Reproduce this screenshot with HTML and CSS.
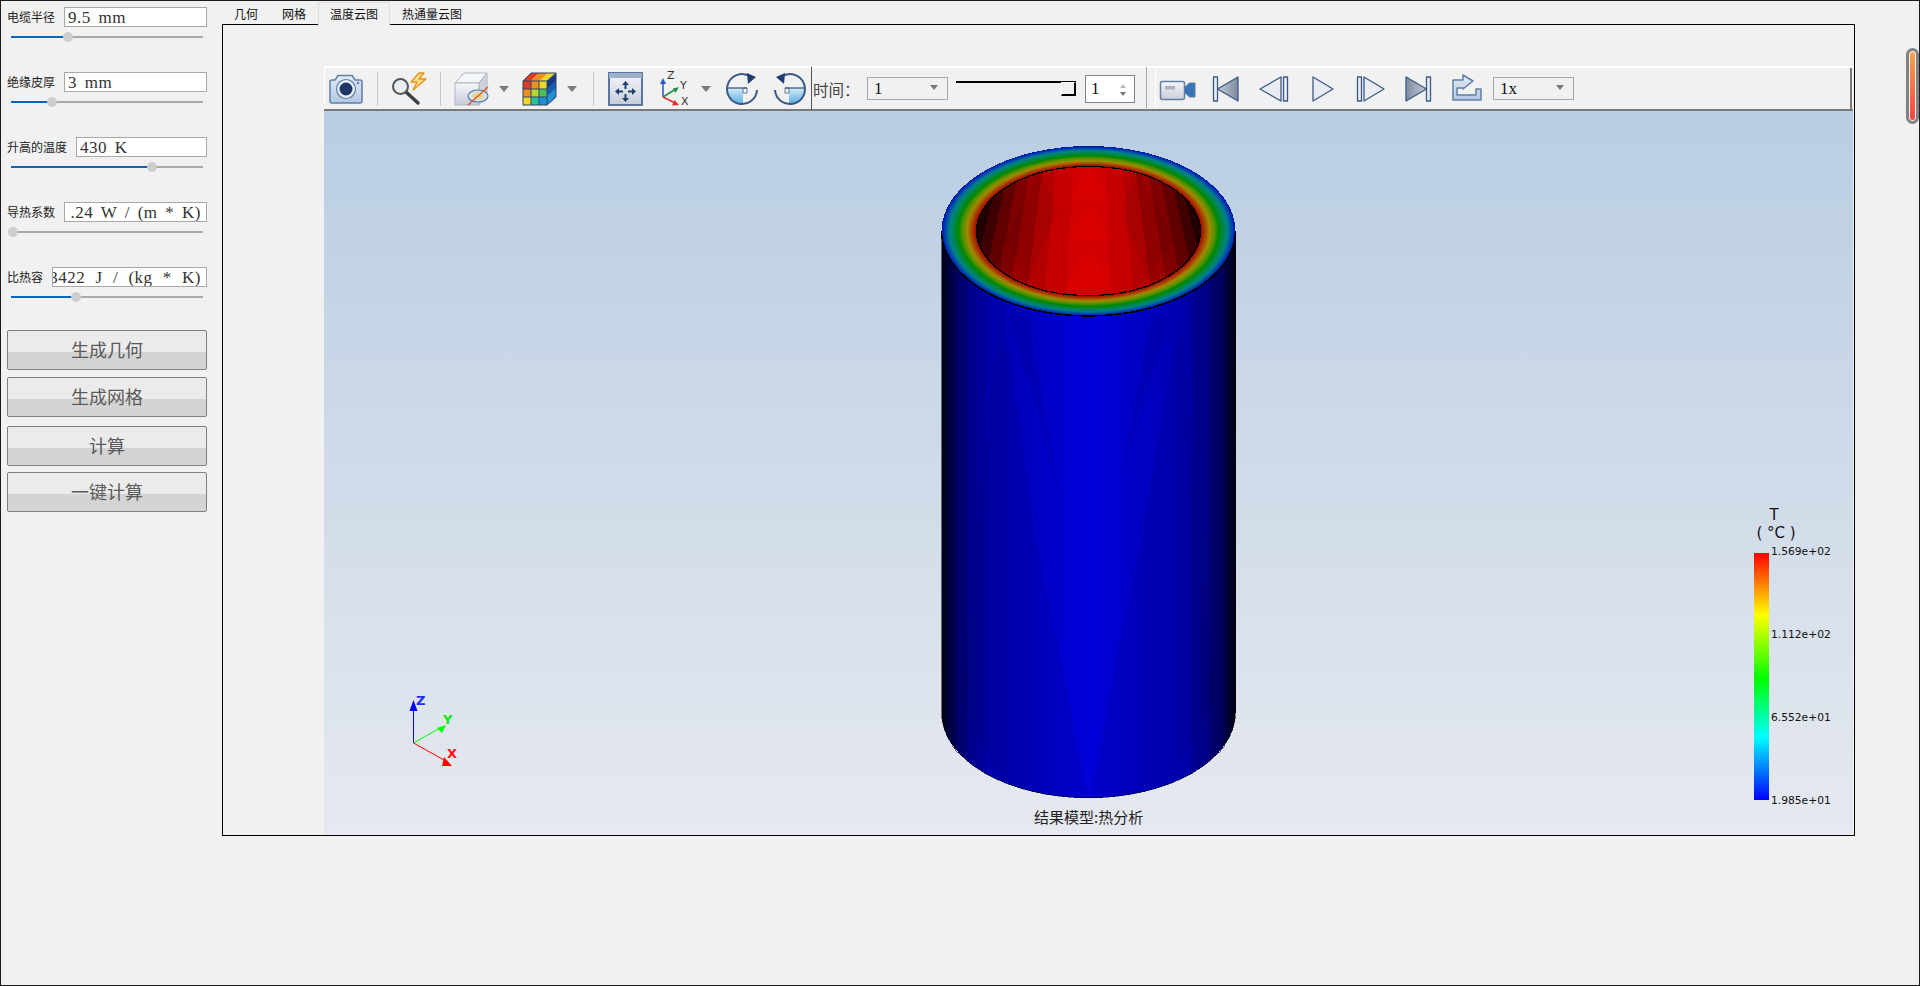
FILE: index.html
```html
<!DOCTYPE html>
<html lang="zh">
<head>
<meta charset="utf-8">
<title>电缆热分析</title>
<link rel="stylesheet" href="styles.css">
</head>
<body>
<svg class="defs" aria-hidden="true">
  <defs>
    <linearGradient id="gBody" x1="0" y1="0" x2="0" y2="1"><stop offset="0" stop-color="#e3ebf6"/><stop offset="1" stop-color="#b4c8e2"/></linearGradient>
    <linearGradient id="gGrey" x1="0" y1="0" x2="0" y2="1"><stop offset="0" stop-color="#f6f7f9"/><stop offset="1" stop-color="#c6cdda"/></linearGradient>
    <linearGradient id="gSolid" x1="0" y1="0" x2="1" y2="0"><stop offset="0" stop-color="#7f8ba0"/><stop offset="1" stop-color="#c4cad6"/></linearGradient>
    <linearGradient id="gSolidR" x1="0" y1="0" x2="1" y2="0"><stop offset="0" stop-color="#c4cad6"/><stop offset="1" stop-color="#7f8ba0"/></linearGradient>
    <linearGradient id="gPie" x1="0" y1="0" x2="0" y2="1"><stop offset="0" stop-color="#d5ebf9"/><stop offset="1" stop-color="#57ade3"/></linearGradient>
  </defs>
</svg>
<div class="window">
  <aside class="side">
    <div class="param">
      <div class="field"><span class="field-label">电缆半径</span><div class="value">9.5 mm</div></div>
      <div class="slider"><div class="slider-fill" style="width:57px"><i class="slider-thumb"></i></div></div>
    </div>
    <div class="param">
      <div class="field"><span class="field-label">绝缘皮厚</span><div class="value">3 mm</div></div>
      <div class="slider"><div class="slider-fill" style="width:41px"><i class="slider-thumb"></i></div></div>
    </div>
    <div class="param">
      <div class="field"><span class="field-label">升高的温度</span><div class="value">430 K</div></div>
      <div class="slider"><div class="slider-fill" style="width:141px"><i class="slider-thumb"></i></div></div>
    </div>
    <div class="param">
      <div class="field"><span class="field-label">导热系数</span><div class="value value-clip"><span>.24 W / (m * K)</span></div></div>
      <div class="slider"><div class="slider-fill" style="width:2px"><i class="slider-thumb"></i></div></div>
    </div>
    <div class="param">
      <div class="field"><span class="field-label">比热容</span><div class="value value-clip value-long"><span>3422 J / (kg * K)</span></div></div>
      <div class="slider"><div class="slider-fill" style="width:65px"><i class="slider-thumb"></i></div></div>
    </div>
    <div class="actions">
      <button class="action">生成几何</button>
      <button class="action">生成网格</button>
      <button class="action action-far">计算</button>
      <button class="action action-near">一键计算</button>
    </div>
  </aside>

  <main class="main">
    <nav class="tabs">
      <span class="tab">几何</span>
      <span class="tab">网格</span>
      <span class="tab tab-on">温度云图</span>
      <span class="tab">热通量云图</span>
    </nav>
    <section class="pane">
      <div class="toolbar">
        <span class="tool"><svg viewBox="0 0 44 40"><path class="ic" d="M8 11h3l3-4.500h14l3 4.500h5q2 0 2 2v19q0 2-2 2H8q-2 0-2-2V13q0-2 2-2z"/><circle cx="22" cy="20" r="9.500" class="lens"/><circle cx="22" cy="20" r="6.500" class="pupil"/><circle cx="34" cy="14" r="1.200" class="dot"/></svg></span>
        <span class="sep"></span>
        <span class="tool"><svg viewBox="0 0 44 40"><line x1="19" y1="23" x2="31" y2="34" class="handle"/><circle cx="13.500" cy="17.500" r="7.500" class="glass"/><path class="bolt" d="M32 4l-8 9h6l-4 8 13-11h-7l5-6z"/></svg></span>
        <span class="sep"></span>
        <span class="tool"><svg viewBox="0 0 44 40"><path class="boxt" d="M5 14l9-10h23l-8 10z"/><path class="boxs" d="M29 14l8-10v22l-8 10z"/><rect x="5" y="14" width="24" height="22" class="boxf"/><ellipse cx="28" cy="27" rx="10" ry="6" class="disc"/><ellipse cx="28" cy="27" rx="6" ry="3.500" class="disc2"/><line x1="18" y1="36" x2="38" y2="18" class="slash"/></svg></span>
        <span class="drop"></span>
        <span class="tool g4"><svg viewBox="0 0 44 40"><path class="c-d" d="M29 12l9-8v24l-9 8z"/><path class="c-b" d="M29 19.300l9-8v8.500l-9 8z"/><path class="c-c" d="M29 27l9-8v9l-9 8z"/><path class="c-r" d="M5 12l8-8h8l-8 8z"/><path class="c-o" d="M13 12l8-8h9l-8 8z"/><path class="c-y" d="M21 12l9-8h8l-9 8z"/><rect x="5" y="12" width="8" height="8" class="c-r"/><rect x="13" y="12" width="8" height="8" class="c-o"/><rect x="21" y="12" width="8" height="8" class="c-y"/><rect x="5" y="20" width="8" height="8" class="c-o"/><rect x="13" y="20" width="8" height="8" class="c-l"/><rect x="21" y="20" width="8" height="8" class="c-g"/><rect x="5" y="28" width="8" height="8" class="c-y"/><rect x="13" y="28" width="8" height="8" class="c-t"/><rect x="21" y="28" width="8" height="8" class="c-c"/><path class="c-grid" d="M5 12h24v24H5zM13 12v24M21 12v24M5 20h24M5 28h24M5 12l8-8h25l-9 8M38 4v24l-9 8M13 4l-8 8"/></svg></span>
        <span class="drop"></span>
        <span class="sep sep-wide"></span>
        <span class="tool"><svg viewBox="0 0 44 40"><rect x="6" y="4" width="33" height="32" class="fit"/><rect x="6" y="4" width="33" height="5" class="fitbar"/><path class="mv" d="M22.500 12l3.500 4h-2.500v4h-2v-4H19zM22.500 33l-3.500-4h2.500v-4h2v4H26zM12 22.500l4-3.500v2.500h4v2h-4V26zM33 22.500L29 26v-2.500h-4v-2h4V19z"/></svg></span>
        <span class="tool g5"><svg viewBox="0 0 44 40"><line x1="11" y1="28" x2="11" y2="13" class="ax-z"/><path class="ax-zh" d="M11 9l3 6H8z"/><line x1="11" y1="28" x2="23" y2="20.500" class="ax-y"/><path class="ax-yh" d="M27 18l-3.500 6-2.500-4.500z"/><line x1="11" y1="28" x2="22" y2="33.500" class="ax-x"/><path class="ax-xh" d="M27 36l-7 .5 2.500-5.500z"/><text x="15" y="10" class="ax-t">Z</text><text x="28" y="20" class="ax-t">Y</text><text x="29" y="36" class="ax-t">X</text></svg></span>
        <span class="drop"></span>
        <span class="tool tool-sm g6"><svg viewBox="0 0 40 40"><path class="pie" d="M5 19h16v16A15 15 0 0 1 5 19z"/><path class="pie-sq" d="M21 19h4v5h-4z"/><line x1="5" y1="19" x2="25" y2="19" class="pie-l"/><path class="arc" d="M35 21A15 15 0 1 1 27 6.800"/><path class="head" d="M25 4l9 4-8 7z"/></svg></span>
        <span class="tool tool-sm g8"><svg viewBox="0 0 40 40"><g class="flip"><path class="pie" d="M5 19h16v16A15 15 0 0 1 5 19z"/><path class="pie-sq" d="M21 19h4v5h-4z"/><line x1="5" y1="19" x2="25" y2="19" class="pie-l"/><path class="arc" d="M35 21A15 15 0 1 1 27 6.800"/><path class="head" d="M25 4l9 4-8 7z"/></g></svg></span>
        <span class="divider"></span>
        <span class="time-label">时间：</span>
        <span class="combo combo-time"><span>1</span><i class="combo-arrow"></i></span>
        <span class="timeline"><i class="timeline-handle"></i></span>
        <span class="spin"><span>1</span><i class="spin-arrows"></i></span>
        <span class="sep-soft"></span>
        <div class="toolbar2">
          <span class="tool"><svg viewBox="0 0 44 40"><rect x="4.500" y="12.500" width="24" height="18" rx="2" class="ic-grey"/><rect x="9" y="17" width="10" height="3.500" class="vbar"/><path class="vlens" d="M28.500 18.500l5-4.500h5.500v14h-5.500l-5-4.500z"/></svg></span>
          <span class="tool g4"><svg viewBox="0 0 44 40"><rect x="9.500" y="8" width="4" height="24" class="pb"/><path class="pb-solid-l" d="M13.500 20L34 8v24z"/></svg></span>
          <span class="tool g4"><svg viewBox="0 0 44 40"><path class="pb" d="M8 20L29 8v24z"/><rect x="31.500" y="8" width="4" height="24" class="pb"/></svg></span>
          <span class="tool g5"><svg viewBox="0 0 44 40"><path class="pb" d="M12 8l20 12-20 12z"/></svg></span>
          <span class="tool g3"><svg viewBox="0 0 44 40"><rect x="9.500" y="8" width="4" height="24" class="pb"/><path class="pb" d="M16 8l20 12-20 12z"/></svg></span>
          <span class="tool g4"><svg viewBox="0 0 44 40"><path class="pb-solid-r" d="M10 8l20.500 12L10 32z"/><rect x="30.500" y="8" width="4" height="24" class="pb"/></svg></span>
          <span class="tool g5"><svg viewBox="0 0 44 40"><path class="ic" d="M8 11h10V6l10 6-10 8v-1h-6v7h19v-6h5v11H8z"/></svg></span>
          <span class="combo combo-speed g4"><span>1x</span><i class="combo-arrow"></i></span>
        </div>
      </div>
      <div class="view">
        <svg class="scene" viewBox="324 111 1529 724">
          <defs>
            <linearGradient id="side" x1="0" y1="0" x2="1" y2="0">
              <stop offset="0" stop-color="#000018"/><stop offset=".02" stop-color="#00002c"/><stop offset=".02" stop-color="#00003a"/><stop offset=".05" stop-color="#000052"/><stop offset=".05" stop-color="#000064"/><stop offset=".09" stop-color="#00007c"/><stop offset=".09" stop-color="#00008c"/><stop offset=".15" stop-color="#00009e"/><stop offset=".15" stop-color="#0000a8"/><stop offset=".24" stop-color="#0000b8"/><stop offset=".35" stop-color="#0000c8"/><stop offset=".5" stop-color="#0000da"/><stop offset=".65" stop-color="#0000c8"/><stop offset=".77" stop-color="#0000b8"/><stop offset=".85" stop-color="#0000a4"/><stop offset=".85" stop-color="#000096"/><stop offset=".91" stop-color="#000082"/><stop offset=".91" stop-color="#000072"/><stop offset=".96" stop-color="#00005a"/><stop offset=".96" stop-color="#000042"/><stop offset=".985" stop-color="#000032"/><stop offset=".985" stop-color="#000022"/><stop offset="1" stop-color="#000014"/>
            </linearGradient>
            <radialGradient id="ring" cx=".5" cy=".5" r=".5">
              <stop offset=".76" stop-color="#a00000"/><stop offset=".79" stop-color="#a83a00"/><stop offset=".825" stop-color="#a08a00"/><stop offset=".86" stop-color="#4e9000"/><stop offset=".885" stop-color="#008800"/><stop offset=".92" stop-color="#008650"/><stop offset=".945" stop-color="#008288"/><stop offset=".97" stop-color="#0050a8"/><stop offset="1" stop-color="#0010b4"/>
            </radialGradient>
            <linearGradient id="bar" x1="0" y1="0" x2="0" y2="1">
              <stop offset="0" stop-color="#ff0000"/><stop offset=".25" stop-color="#ffff00"/><stop offset=".51" stop-color="#00ff00"/><stop offset=".745" stop-color="#00ffff"/><stop offset="1" stop-color="#0000ff"/>
            </linearGradient>
            <clipPath id="innerClip"><ellipse cx="1088.500" cy="231" rx="112" ry="64.500"/></clipPath>
            <clipPath id="sideClip"><path d="M941.500 231V713A147 85 0 0 0 1235.500 713V231z"/></clipPath>
          </defs>
          <g class="crisp">
            <path d="M941.500 231V713A147 85 0 0 0 1235.500 713V231z" fill="url(#side)" class="outline"/>
            <g clip-path="url(#sideClip)" class="facets">
              <path d="M1000 300L1040 560L1010 800L960 700z"/>
              <path d="M1180 320L1140 540L1165 790L1215 700z"/>
              <path d="M1040 560L1089 800L1010 800z"/>
              <path d="M1140 540L1089 800L1165 790z"/>
              <path d="M1010 316L1060 500L1030 316z"/>
              <path d="M1150 316L1120 480L1170 316z"/>
            </g>
            <ellipse cx="1088.500" cy="231" rx="147" ry="85" fill="url(#ring)"/>
            <path d="M941.500 231A147 85 0 0 0 1235.500 231" class="rim"/>
            <g clip-path="url(#innerClip)">
              <path fill="#200000" d="M1089 -200L950 300H968z"/><path fill="#3e0000" d="M1089 -200L968 300H980z"/><path fill="#600000" d="M1089 -200L980 300H994z"/><path fill="#7e0000" d="M1089 -200L994 300H1009z"/><path fill="#9a0000" d="M1089 -200L1009 300H1026z"/><path fill="#b40000" d="M1089 -200L1026 300H1044z"/><path fill="#c60000" d="M1089 -200L1044 300H1067z"/><path fill="#d20000" d="M1089 -200L1067 300H1111z"/><path fill="#c60000" d="M1089 -200L1111 300H1134z"/><path fill="#b40000" d="M1089 -200L1134 300H1152z"/><path fill="#9a0000" d="M1089 -200L1152 300H1169z"/><path fill="#7e0000" d="M1089 -200L1169 300H1184z"/><path fill="#600000" d="M1089 -200L1184 300H1198z"/><path fill="#3e0000" d="M1089 -200L1198 300H1210z"/><path fill="#200000" d="M1089 -200L1210 300H1226z"/>
              <path class="glint" d="M1089 167L1108 198H1070zM1089 205L1112 240H1066zM1089 250L1114 290H1064z"/>
              <path class="shade" d="M1040 170L1005 240L1030 280L1058 210zM1138 170L1173 240L1148 280L1120 210z"/>
            </g>
            <ellipse cx="1088.500" cy="231" rx="112" ry="64.500" class="inner"/>
          </g>
          <line x1="413.500" y1="743" x2="413.500" y2="708" class="tri-z"/>
          <path class="tri-zf" d="M413.500 700l4 11h-8z"/>
          <text x="416" y="705" class="tri-tz">Z</text>
          <line x1="413.500" y1="743" x2="440" y2="728" class="tri-y"/>
          <path class="tri-yf" d="M446 725l-4 8-5-5z"/>
          <text x="443" y="724" class="tri-ty">Y</text>
          <line x1="413.500" y1="743" x2="444" y2="760" class="tri-x"/>
          <path class="tri-xf" d="M452 766h-10l2-9z"/>
          <text x="447" y="758" class="tri-tx">X</text>
          <text x="1034" y="823" class="caption">结果模型:热分析</text>
          <text x="1774" y="520" class="bar-title" text-anchor="middle">T</text>
          <text x="1776" y="538" class="bar-title" text-anchor="middle">( °C )</text>
          <rect x="1754" y="553" width="15" height="247" fill="url(#bar)"/>
          <text x="1771" y="555" class="bar-label">1.569e+02</text>
          <text x="1771" y="638" class="bar-label">1.112e+02</text>
          <text x="1771" y="721" class="bar-label">6.552e+01</text>
          <text x="1771" y="804" class="bar-label">1.985e+01</text>
        </svg>
      </div>
    </section>
  </main>

  <div class="rail"><div class="thumb"></div></div>
</div>
</body>
</html>
```

FILE: styles.css
```css
* { box-sizing: border-box; }
html, body { margin: 0; padding: 0; height: 100%; }
body { background: #f1f1f1; font-family: "Noto Sans CJK SC", "Liberation Sans", sans-serif; overflow: hidden; }
.defs { position: absolute; width: 0; height: 0; }
.window { display: flex; height: 986px; border: 1px solid #1c1c1c; background: #f1f1f1; }

/* left parameter column */
.side { width: 221px; flex: none; padding-top: 6px; }
.param { height: 65px; }
.field { display: flex; align-items: center; gap: 9px; padding: 0 15px 0 6px; height: 20px; }
.field-label { font-size: 12px; line-height: 20px; color: #222; white-space: nowrap; }
.value { flex: 1; min-width: 0; height: 20px; display: flex; align-items: center; padding: 2px 3px 0; overflow: hidden; background: #fff; border: 1px solid #a8a8a8; font: 17px/16px "Liberation Serif", "Noto Sans CJK SC", serif; letter-spacing: .5px; word-spacing: 3px; color: #333; white-space: pre; }
.value-clip { justify-content: flex-end; padding: 2px 5px 0 0; }
.value-long { word-spacing: 5.500px; }
.value-clip span { flex: none; }
.slider { position: relative; height: 2px; margin: 9px 19px 0 10px; background: #aaa; }
.slider-fill { position: relative; height: 2px; background: #0a64ba; }
.slider-thumb { position: absolute; right: -5px; top: -4px; width: 10px; height: 10px; border-radius: 50%; background: #cdcdcd; }

.actions { padding: 0 15px 0 6px; margin-top: -2px; display: flex; flex-direction: column; gap: 7px; }
.action { height: 40px; padding: 0 0 2px; border: 1px solid #808080; border-radius: 2px; background: linear-gradient(#ebebeb 0, #ebebeb 21px, #d4d4d4 21px, #d4d4d4 100%); font: 18px/20px "Noto Sans CJK SC", sans-serif; color: #5a5a5a; }
.action-far { margin-top: 2px; }
.action-near { margin-top: -1px; }

/* main tabbed area */
.main { width: 1633px; flex: none; display: flex; flex-direction: column; height: 835px; }
.tabs { display: flex; height: 23px; padding-top: 1px; flex: none; }
.tab { padding: 0 12px; font-size: 12px; line-height: 24px; color: #111; white-space: nowrap; }
.tab-on { position: relative; z-index: 1; height: 24px; line-height: 22px; padding: 0 11px; background: #f1f1f1; border: 1px solid #dcdcdc; border-bottom-color: #f1f1f1; }
.pane { flex: 1; min-height: 0; border: 1px solid #000; padding: 41px 1px 0 101px; display: flex; flex-direction: column; }

/* toolbar */
.toolbar { flex: none; height: 45px; display: flex; align-items: center; border-top: 2px solid #fff; border-bottom: 2px solid #7a7a7a; box-shadow: inset 1px 0 0 #fff; background: #f1f1f1; }
.tool { flex: none; width: 44px; height: 40px; display: block; }
.tool svg { display: block; width: 100%; height: 100%; overflow: visible; }
.tool-sm { width: 40px; }
.g3 { margin-left: 3px; } .g4 { margin-left: 4px; } .g5 { margin-left: 5px; } .g6 { margin-left: 6px; } .g8 { margin-left: 8px; }
.sep { flex: none; width: 1px; height: 34px; margin: 0 9px; background: #c8c8c8; }
.sep-wide { margin-left: 11px; }
.drop { flex: none; width: 20px; height: 6px; position: relative; }
.drop::after { content: ""; position: absolute; left: 5px; top: 0; border: 5px solid transparent; border-top: 6px solid #7b7b7b; border-bottom: 0; }
.divider { flex: none; width: 1px; height: 43px; margin-left: 1px; background: #555; }
.time-label { flex: none; width: 54px; margin-left: 1px; font-size: 15.500px; line-height: 20px; color: #444; }
.combo { flex: none; position: relative; height: 23px; background: #f1f1f1; border: 1px solid #a8a8a8; font: 17px/21px "Liberation Serif", serif; color: #111; padding-left: 6px; }
.combo-time { width: 81px; }
.combo-speed { width: 81px; }
.combo-arrow { position: absolute; right: 9px; top: 7px; border: 4px solid transparent; border-top: 5px solid #777; border-bottom: 0; }
.timeline { flex: none; position: relative; width: 120px; height: 14px; margin-left: 8px; border-top: 2px solid #000; align-self: flex-start; margin-top: 13px; }
.timeline-handle { position: absolute; right: 0; top: -1px; width: 15px; height: 14px; background: #f1f1f1; border-right: 2px solid #000; border-bottom: 2px solid #000; border-top: 1px solid #fff; border-left: 1px solid #fff; }
.spin { flex: none; position: relative; width: 50px; height: 28px; margin-left: 9px; background: #fff; border: 1px solid #858585; font: 17px/26px "Liberation Serif", serif; color: #111; padding-left: 5px; }
.spin-arrows { position: absolute; right: 8px; top: 8px; width: 0; height: 0; border: 3px solid transparent; border-top: 0; border-bottom: 4px solid #bbb; }
.spin-arrows::after { content: ""; position: absolute; left: -3px; top: 8px; border: 3px solid transparent; border-bottom: 0; border-top: 4px solid #777; }
.sep-soft { flex: none; width: 1px; height: 43px; margin-left: 11px; background: #aaa; }
.toolbar2 { flex: 1; height: 100%; display: flex; align-items: center; margin-left: 8px; border-left: 1px solid #fff; border-right: 2px solid #7a7a7a; margin-right: 1px; }

/* toolbar icons */
.ic { fill: url(#gBody); stroke: #5f7fa6; stroke-width: 1.500; stroke-linejoin: round; }
.ic-grey { fill: url(#gGrey); stroke: #5f7fa6; stroke-width: 1.500; }
.lens { fill: #e8eff8; stroke: #5f7fa6; stroke-width: 1.200; }
.pupil { fill: #1d3768; }
.dot { fill: #5f7fa6; }
.glass { fill: #e9eef3; stroke: #555; stroke-width: 2; }
.handle { stroke: #3f3f3f; stroke-width: 3.500; stroke-linecap: round; }
.bolt { fill: #fde28e; stroke: #ee8f12; stroke-width: 1.300; stroke-linejoin: round; }
.boxt { fill: #f5f6f8; stroke: #aeb7c4; }
.boxs { fill: #cdd3dc; stroke: #aeb7c4; }
.boxf { fill: url(#gGrey); stroke: #aeb7c4; }
.disc { fill: #d8e2ee; stroke: #56779f; stroke-width: 1.200; }
.disc2 { fill: #e8d894; }
.slash { stroke: #e0582a; stroke-width: 1.500; }
.c-r { fill: #df3d20; } .c-o { fill: #f0901a; } .c-y { fill: #eed726; } .c-l { fill: #b6d433; } .c-g { fill: #4cc35a; } .c-t { fill: #2dc398; } .c-c { fill: #2092d4; } .c-d { fill: #143a82; } .c-b { fill: #1c5cb0; }
.c-grid { fill: none; stroke: #2d4468; stroke-width: 1; }
.fit { fill: url(#gGrey); stroke: #5a76a0; stroke-width: 2; }
.fitbar { fill: #9fb1ca; }
.mv { fill: #1f3f70; }
.ax-z { stroke: #2a56c4; stroke-width: 1.500; } .ax-zh { fill: #2a56c4; }
.ax-y { stroke: #1f8f4a; stroke-width: 1.500; } .ax-yh { fill: #1f8f4a; }
.ax-x { stroke: #e62b2b; stroke-width: 1.500; } .ax-xh { fill: #e62b2b; }
.ax-t { font: 11px "DejaVu Sans", sans-serif; fill: #333; }
.arc { fill: none; stroke: #3a5a85; stroke-width: 2; }
.head { fill: #1f3f70; }
.pie { fill: url(#gPie); }
.pie-sq { fill: #f4f8fc; stroke: #3a5a85; stroke-width: .800; }
.pie-l { stroke: #3a5a85; stroke-width: 1.300; }
.flip { transform: translateX(40px) scaleX(-1); }
.vbar { fill: #aab3c2; }
.vlens { fill: #3a74b6; stroke: #5f7fa6; }
.pb { fill: #e9edf3; stroke: #3a5a85; stroke-width: 1.300; stroke-linejoin: round; }
.pb-solid-l { fill: url(#gSolidR); stroke: #3a5a85; stroke-width: 1.300; stroke-linejoin: round; }
.pb-solid-r { fill: url(#gSolid); stroke: #3a5a85; stroke-width: 1.300; stroke-linejoin: round; }

/* 3D view */
.view { flex: 1; min-height: 0; background: linear-gradient(#b9cde3, #e6e9ef); }
.scene { display: block; width: 100%; height: 100%; }
.crisp { shape-rendering: crispEdges; }
.outline { stroke: #000; stroke-width: .500; }
.facets path { fill: #000; opacity: .06; }
.glint { fill: #e00000; opacity: .5; }
.shade { fill: #000; opacity: .06; }
.rim { fill: none; stroke: #000; stroke-width: 1.500; }
.inner { fill: none; stroke: #000; stroke-width: 1.200; }
.tri-z { stroke: #0000ff; stroke-width: 1; } .tri-zf { fill: #0000ff; }
.tri-y { stroke: #00ff00; stroke-width: 1; } .tri-yf { fill: #00ff00; }
.tri-x { stroke: #ff0000; stroke-width: 1; } .tri-xf { fill: #ff0000; }
.tri-tz, .tri-ty, .tri-tx { font: bold 13px "DejaVu Sans", sans-serif; }
.tri-tz { fill: #2030e8; } .tri-ty { fill: #00ee00; } .tri-tx { fill: #ff1010; }
.caption { font: 15px "Noto Sans CJK SC", sans-serif; fill: #222; }
.bar-title { font: 15px "DejaVu Sans", sans-serif; fill: #111; }
.bar-label { font: 10.700px "DejaVu Sans", sans-serif; fill: #111; }

/* page scrollbar */
.rail { flex: 1; padding: 47px 0 0 51px; }
.thumb { width: 13px; height: 76px; border: 3px solid #828282; border-radius: 7px; background: linear-gradient(#ffa64d, #ff4040); box-shadow: inset 0 0 0 1px #fff; }
```
